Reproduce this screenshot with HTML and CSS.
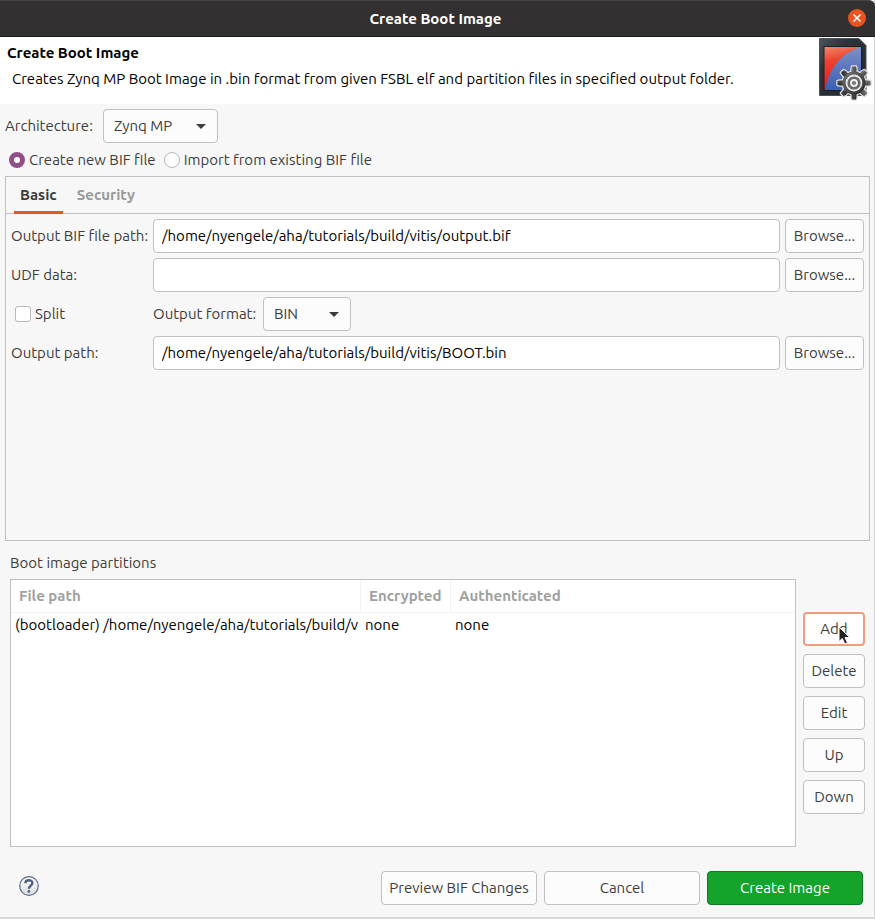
FILE: index.html
```html
<!DOCTYPE html>
<html lang="en">
<head>
<meta charset="utf-8">
<title>Create Boot Image</title>
<link rel="stylesheet" href="styles.css">
</head>
<body>
<div class="window">
  <div class="titlebar">
    <span class="titlebar-text">Create Boot Image</span>
    <button class="close" type="button" aria-label="Close">
      <svg width="18" height="18" viewBox="0 0 18 18"><circle cx="9" cy="9" r="9" fill="#e95420"/><path d="M5.500 5.500l7 7M12.500 5.500l-7 7" stroke="#fff" stroke-width="1.600"/></svg>
    </button>
  </div>

  <header class="banner">
    <div class="banner-text">
      <h1>Create Boot Image</h1>
      <p>Creates Zynq MP Boot Image in .bin format from given FSBL elf and partition files in specified output folder.</p>
    </div>
    <svg class="banner-icon" width="54" height="64" viewBox="0 0 54 64" aria-hidden="true">
      <defs>
        <linearGradient id="card" x1="0" y1="0" x2="1" y2="1"><stop offset="0" stop-color="#4d565d"/><stop offset=".3" stop-color="#2c343a"/><stop offset="1" stop-color="#20272c"/></linearGradient>
        <linearGradient id="red" x1="0" y1="0" x2=".2" y2="1"><stop offset="0" stop-color="#f08a6c"/><stop offset=".35" stop-color="#ec4330"/><stop offset="1" stop-color="#e3141c"/></linearGradient>
        <linearGradient id="blue" x1="0" y1="0" x2="0" y2="1"><stop offset="0" stop-color="#7d8fc6"/><stop offset=".5" stop-color="#5c76bd"/><stop offset="1" stop-color="#3a60b3"/></linearGradient>
        <linearGradient id="gear" x1="0" y1="0" x2="1" y2="1"><stop offset="0" stop-color="#757575"/><stop offset="1" stop-color="#262626"/></linearGradient>
        <g id="teeth"><path d="M33.500 32L34 29.500h4L38.500 32v28L38 62.500h-4L33.500 60z"/><path d="M33.500 32L34 29.500h4L38.500 32v28L38 62.500h-4L33.500 60z" transform="rotate(45 36 46)"/><path d="M33.500 32L34 29.500h4L38.500 32v28L38 62.500h-4L33.500 60z" transform="rotate(90 36 46)"/><path d="M33.500 32L34 29.500h4L38.500 32v28L38 62.500h-4L33.500 60z" transform="rotate(135 36 46)"/><circle cx="36" cy="46" r="11.500"/></g>
      </defs>
      <path d="M1.500 1.500H41l7 7V58.500H1.500z" fill="url(#card)" stroke="#4a5359" stroke-width="1"/>
      <path d="M6 9.500h37.500v44H6z" fill="url(#red)" stroke="#1b1f28"/>
      <path d="M43 10V53H7C10 32 24 15 43 10z" fill="url(#blue)"/>
      <use href="#teeth" fill="#ddd" stroke="#ddd" stroke-width="2.500" stroke-linejoin="round"/>
      <use href="#teeth" fill="url(#gear)"/>
      <circle cx="36" cy="46" r="7.500" fill="#686868" stroke="#e6e6e6" stroke-width="1.800"/>
      <circle cx="36" cy="46" r="3" fill="#777" stroke="#eee" stroke-width="1.800"/>
    </svg>
  </header>

  <main class="content">
    <div class="arch-row">
      <label for="arch">Architecture:</label>
      <span class="select arch-select">
        <select id="arch"><option>Zynq MP</option></select>
        <svg class="arrow" width="10" height="5" viewBox="0 0 10 5"><path d="M0 0h10L5 5z" fill="#3d3d3d"/></svg>
      </span>
    </div>
    <div class="radio-row">
      <label><input type="radio" name="bif" checked>Create new BIF file</label>
      <label><input type="radio" name="bif">Import from existing BIF file</label>
    </div>

    <section class="panel">
      <div class="tabs" role="tablist">
        <button class="tab active" type="button" role="tab" aria-selected="true">Basic</button>
        <button class="tab" type="button" role="tab" aria-selected="false">Security</button>
      </div>
      <div class="form">
        <label for="bif-path">Output BIF file path:</label>
        <input id="bif-path" type="text" value="/home/nyengele/aha/tutorials/build/vitis/output.bif">
        <button class="btn" type="button">Browse...</button>

        <label for="udf">UDF data:</label>
        <input id="udf" type="text">
        <button class="btn" type="button">Browse...</button>

        <label class="check"><input type="checkbox">Split</label>
        <div class="format">
          <label for="fmt">Output format:</label>
          <span class="select fmt-select">
            <select id="fmt"><option>BIN</option></select>
            <svg class="arrow" width="10" height="5" viewBox="0 0 10 5"><path d="M0 0h10L5 5z" fill="#3d3d3d"/></svg>
          </span>
        </div>
        <span></span>

        <label for="out-path">Output path:</label>
        <input id="out-path" type="text" value="/home/nyengele/aha/tutorials/build/vitis/BOOT.bin">
        <button class="btn" type="button">Browse...</button>
      </div>
    </section>

    <section class="partitions">
      <h2>Boot image partitions</h2>
      <div class="partition-body">
        <div class="table-box">
          <table>
            <colgroup><col class="col-path"><col class="col-enc"><col></colgroup>
            <thead><tr><th>File path</th><th>Encrypted</th><th>Authenticated</th></tr></thead>
            <tbody><tr><td><div class="clip">(bootloader) /home/nyengele/aha/tutorials/build/v</div></td><td>none</td><td>none</td></tr></tbody>
          </table>
        </div>
        <div class="actions">
          <div class="add-wrap">
            <button class="btn focused" type="button">Add</button>
            <svg class="pointer" width="14" height="20" viewBox="0 0 14 20" aria-hidden="true"><path d="M1 1v14.500l3.300-3 2.500 5.500 2.700-1.200L7 11.500h4.800z" fill="#222" stroke="#fff" stroke-width="1"/></svg>
          </div>
          <button class="btn" type="button">Delete</button>
          <button class="btn" type="button">Edit</button>
          <button class="btn" type="button">Up</button>
          <button class="btn" type="button">Down</button>
        </div>
      </div>
    </section>
  </main>

  <footer class="footer">
    <button class="help" type="button" aria-label="Help">
      <svg width="20" height="20" viewBox="0 0 20 20"><defs><linearGradient id="hg" x1="0" y1="0" x2="0" y2="1"><stop offset="0" stop-color="#fff"/><stop offset="1" stop-color="#dcdcdc"/></linearGradient></defs><circle cx="10" cy="10" r="9.300" fill="url(#hg)" stroke="#5a6c8c" stroke-width="1.200"/><path d="M6.400 7.200C6.400 3.300 13.400 3.300 13.400 6.900c0 2.600-3.500 2.800-3.500 5.800" fill="none" stroke="#4d5f85" stroke-width="2.400"/><circle cx="9.900" cy="15.400" r="1.400" fill="#4d5f85"/></svg>
    </button>
    <div class="footer-buttons">
      <button class="btn" type="button">Preview BIF Changes</button>
      <button class="btn" type="button">Cancel</button>
      <button class="btn primary" type="button">Create Image</button>
    </div>
  </footer>
</div>
</body>
</html>
```
FILE: styles.css
```css
* { box-sizing: border-box; }

body {
  margin: 0;
  background: #f7f7f7;
  color: #3d3d3d;
  font: 15px/20px Ubuntu, "Noto Sans", sans-serif;
}

button, input, select { font: inherit; color: inherit; margin: 0; }

.window {
  min-height: 100vh;
  display: flex;
  flex-direction: column;
  border-right: 1px solid #d6d6d6;
  border-bottom: 2px solid #d9d9d9;
}

.titlebar {
  position: relative;
  display: flex;
  align-items: center;
  justify-content: center;
  height: 37px;
  margin-right: -1px;
  padding-right: 4px;
  background: #323030;
  border-top: 1px solid #464444;
  border-bottom: 1px solid #1c1b1b;
  border-top-right-radius: 6px;
  color: #fff;
  font-weight: 700;
}

.close {
  position: absolute;
  right: 9px;
  top: 8px;
  padding: 0;
  border: 0;
  background: none;
  line-height: 0;
}

.banner {
  display: flex;
  justify-content: space-between;
  height: 67px;
  padding-right: 2px;
  background: #fff;
  color: #000;
}

.banner-text { padding: 6px 0 0 7px; white-space: nowrap; }
h1 { margin: 0 0 6px; font-size: 15px; line-height: 20px; }
.banner p { margin: 0 0 0 5px; }
.banner-icon { flex: none; }

.content {
  flex: 1;
  display: flex;
  flex-direction: column;
  padding: 5px 4px 0 5px;
}

.arch-row { display: flex; align-items: center; gap: 10px; }
.arch-row label { width: 88px; white-space: nowrap; }

.select { position: relative; display: block; }
.arch-select { width: 115px; }
.fmt-select { width: 88px; }

select {
  display: block;
  width: 100%;
  height: 34px;
  padding: 0 10px;
  appearance: none;
  border: 1px solid #c0c0c0;
  border-radius: 4px;
  background: #fcfcfc;
}

.arrow { position: absolute; right: 12px; top: 15px; pointer-events: none; }

.radio-row {
  display: flex;
  gap: 8px;
  height: 33px;
  padding-left: 4px;
}
.radio-row label { display: flex; align-items: center; gap: 4px; }

input[type="radio"], input[type="checkbox"] {
  appearance: none;
  flex: none;
  width: 16px;
  height: 16px;
  border: 1px solid #b8b8b8;
  background: #fff;
}
input[type="radio"] { border-radius: 50%; }
input[type="radio"]:checked { border: 5px solid #924d8b; }
input[type="checkbox"] { border-radius: 3px; }

.panel { flex: 1 0 365px; border: 1px solid #c0c0c0; }

.tabs {
  display: flex;
  height: 37px;
  padding-left: 8px;
  border-bottom: 1px solid #c0c0c0;
}
.tab {
  height: 37px;
  padding: 2px 6px 0;
  border: 0;
  border-bottom: 3px solid transparent;
  background: none;
  color: #999;
  font-weight: 700;
}
.tab.active { border-color: #e95420; color: #3d3d3d; }
.tab + .tab { margin-left: 8px; }

.form {
  display: grid;
  grid-template-columns: 137px 1fr 79px;
  gap: 5px;
  align-items: center;
  padding: 5px;
}
.form label { white-space: nowrap; }
.check { display: flex; align-items: center; gap: 4px; padding-left: 4px; }
.format { display: flex; align-items: center; }
.format label { width: 110px; }

input[type="text"] {
  width: 100%;
  height: 34px;
  padding: 0 8px 2px;
  border: 1px solid #c0c0c0;
  border-radius: 4px;
  background: #fff;
  color: #000;
}

.btn {
  height: 34px;
  padding: 0 4px;
  border: 1px solid #c0c0c0;
  border-radius: 4px;
  background: #fcfcfc;
  white-space: nowrap;
}

.partitions {
  flex: 1 0 306px;
  display: flex;
  flex-direction: column;
  padding: 12px 5px 0;
}
h2 { margin: 0 0 6px; font-size: 15px; line-height: 20px; font-weight: 400; }

.partition-body { flex: 1; display: flex; gap: 7px; }
.table-box { flex: 1; border: 1px solid #c0c0c0; background: #fff; }

table { width: 100%; table-layout: fixed; border-collapse: separate; border-spacing: 0; }
.col-path { width: 350px; }
.col-enc { width: 90px; }
th {
  height: 33px;
  padding: 0 8px;
  border-right: 1px solid #f3f3f3;
  border-bottom: 1px solid #f3f3f3;
  color: #a0a0a0;
  text-align: left;
}
th:last-child { border-right: 0; }
td { height: 24px; padding: 0 4px; color: #000; }
td:first-child { padding-right: 2px; }
.clip { overflow: hidden; white-space: nowrap; }

.actions {
  display: flex;
  flex-direction: column;
  gap: 8px;
  width: 62px;
  padding-top: 33px;
}
.add-wrap { position: relative; display: flex; }
.add-wrap .btn { flex: 1; }
.focused { border: 2px solid #ef9c80; background: #fff; }
.pointer { position: absolute; left: 35px; top: 14px; }

.footer {
  display: flex;
  align-items: center;
  justify-content: space-between;
  padding: 24px 11px 12px 19px;
}
.help { padding: 0 0 4px; border: 0; background: none; line-height: 0; }
.footer-buttons { display: grid; grid-template-columns: repeat(3, 156px); gap: 7px; }
.primary { border-color: #0d7a1c; background: #14a32b; color: #fff; }
```
